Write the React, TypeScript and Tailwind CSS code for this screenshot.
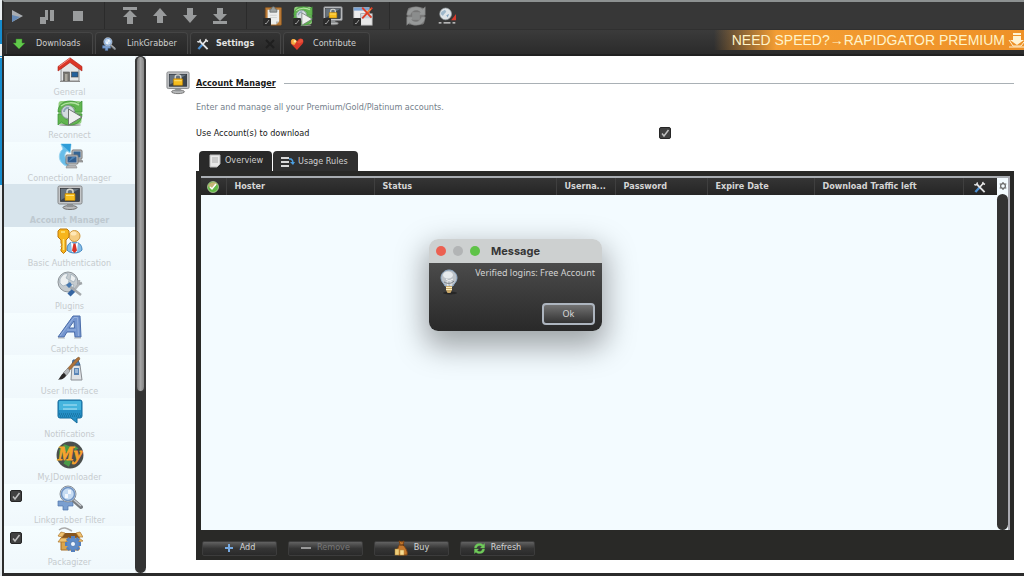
import { useState } from "react";
import type { ReactNode } from "react";

/* ── Shared pieces ── */

function Svg({ className = "w-[26px] h-[26px]", children }: { className?: string; children: ReactNode }) {
  return (
    <svg viewBox="0 0 26 26" className={`shrink-0 ${className}`} fill="none" aria-hidden="true">
      {children}
    </svg>
  );
}

function Check({ id, label }: { id: string; label?: string }) {
  const [on, setOn] = useState(true);
  return (
    <span className="relative block w-3 h-3 shrink-0">
      <input
        id={id}
        type="checkbox"
        aria-label={label}
        checked={on}
        onChange={() => setOn(!on)}
        className="block w-3 h-3 appearance-none rounded-xs border border-[#262626] bg-[#414141]"
      />
      {on && (
        <svg viewBox="0 0 12 12" className="absolute inset-0 w-3 h-3 pointer-events-none" fill="none">
          <path d="M3 6.500 5 9 9.500 3" stroke="#c0c0c0" strokeWidth="1.500" />
        </svg>
      )}
    </span>
  );
}

/* ── Icons ── */

function HomeIcon() {
  return (
    <Svg>
      <path d="M4 12 13 4l9 8v12H4z" fill="#e4e6e7" stroke="#777" strokeWidth=".8" />
      <path d="M1 14V9.500L13 .8l12 8.700V14L13 5.500z" fill="#dc3526" stroke="#a92118" strokeWidth=".6" />
      <path d="m2 9.500 11-8" stroke="#f3867b" strokeWidth="1" />
      <rect x="6.500" y="15" width="6" height="9" fill="#77756f" stroke="#555" strokeWidth=".6" />
      <rect x="8" y="17" width="2.500" height="7" fill="#a9a69d" />
      <rect x="14.500" y="15" width="6.500" height="5" fill="#24619c" stroke="#444" strokeWidth=".6" />
      <path d="M3 24.500h20" stroke="#8b8b8b" />
    </Svg>
  );
}

function RefreshArrows({ main = "#62b550", edge = "#388f35" }: { main?: string; edge?: string }) {
  return (
    <g fill={main} stroke={edge} strokeWidth=".7">
      <path d="M1 12C1 5 6 1 13 1c4 0 6 1 8.500 3L25 1v11H15l3.500-4C15 4.500 8 5 6 12z" />
      <path d="M25 14c0 7-5 11-12 11-4 0-6-1-8.500-3L1 25V14h10l-3.500 4c3.500 3.500 10.500 3 12.500-4z" />
    </g>
  );
}

function ReconnectIcon({ className }: { className?: string }) {
  return (
    <Svg className={className}>
      <ellipse cx="13" cy="25" rx="11" ry="1" fill="#9a9a9a" />
      <rect x="1.500" y="1" width="23" height="23" rx="3" fill="#92ce7e" />
      <RefreshArrows />
      <circle cx="11" cy="12" r="6.500" fill="#d5dde0" stroke="#8b9a9e" />
      <path d="M7 12a4 4 0 0 1 5-4" stroke="#8fa6b8" strokeWidth="2" />
      <path d="M4 6c5-4 13-4 18-1" stroke="#b3e3a2" strokeWidth="1.500" />
      <path d="M11.500 9 25 17l-13.500 8z" fill="#eef0ef" stroke="#6f7572" />
    </Svg>
  );
}

function ConnectionIcon() {
  return (
    <Svg>
      <path d="M12 24C1 21 0 11 6 6L4 1h10l-1 9-3-2c-3 3-3 7 1 9z" fill="#67bde9" stroke="#98d4f0" />
      <path d="M4 1h10l-1 8z" fill="#2f9dd8" />
      <rect x="15" y="7" width="10" height="9" rx="1" fill="#c3c5c6" stroke="#777" />
      <rect x="16.500" y="8.500" width="7" height="6" fill="#356492" />
      <path d="M20 17h5l1 2h-6z" fill="#a7a7a7" stroke="#777" strokeWidth=".6" />
      <rect x="9" y="12" width="12" height="9" rx="1" fill="#c3c5c6" stroke="#777" />
      <rect x="10.500" y="13.500" width="9" height="6" fill="#315d8e" />
      <path d="m11 19 4-5h4z" fill="#4a83b7" />
      <path d="M10 22.500h9l1 2.500H9z" fill="#b5b5b5" stroke="#888" strokeWidth=".6" />
    </Svg>
  );
}

function MonitorLockIcon({ className }: { className?: string }) {
  return (
    <Svg className={className}>
      <ellipse cx="13" cy="22.500" rx="7" ry="2" fill="#b7b9ba" stroke="#717171" />
      <path d="M10 18h6v4h-6z" fill="#8f9294" />
      <rect x="1" y="1" width="24" height="18" rx="1.500" fill="#c4c6c8" stroke="#838688" />
      <rect x="3.500" y="3.500" width="19" height="13" fill="#3c454f" stroke="#202428" strokeWidth=".6" />
      <path d="M4 4h18L4 15z" fill="#66727d" />
      <path d="M10 9V6.500C10 3.500 16 3.500 16 6.500V9" stroke="#d6d6ce" strokeWidth="1.500" />
      <rect x="8" y="8.500" width="10" height="7" rx=".6" fill="#f6bd1d" stroke="#b47b07" strokeWidth=".7" />
      <path d="M9 10.500h8" stroke="#ffe27c" />
    </Svg>
  );
}

function AuthIcon() {
  return (
    <Svg>
      <path d="M10 22c0-6 3-8 7-8s8 2 8 8c-3 4-12 4-15 0z" fill="#86bde6" stroke="#4387c0" />
      <path d="m14 14 3.500 3 3.500-3-1 10h-5z" fill="#fff" />
      <path d="m16.500 15.500-1.500 7 2.500 2.500 2.500-2.500-1.500-7z" fill="#d73228" />
      <circle cx="17.500" cy="8" r="5.500" fill="#f5cd82" stroke="#cf983e" />
      <ellipse cx="16.500" cy="5.500" rx="3" ry="2" fill="#ffe8b7" />
      <path d="M1 3 3 1h7l2 2v6l-3 3v11l-2.500 2.500L4 23v-2l1-1-1-1.500 1-1.500-1-2v-3L1 9z" fill="#f7b51b" stroke="#bd780d" />
      <path d="M4 4h4M6.500 11v11" stroke="#ffe57b" strokeWidth="1.500" />
    </Svg>
  );
}

function PluginsIcon() {
  return (
    <Svg>
      <circle cx="11" cy="11" r="10" fill="#c5cbcf" stroke="#8d9499" />
      <path d="M3 8c3-5 5-6 8-5l-2 4 3 2-1 4-5 2-3-3zM14 3l5 4-2 4-4-2zM13 13l4 1-3 5z" fill="#edf0f1" stroke="#8196a5" strokeWidth=".5" />
      <path d="m12 24 6-6" stroke="#3565a2" strokeWidth="4.500" />
      <path d="m18 18 4-5V9" stroke="#b0b4b7" strokeWidth="2.500" />
      <path d="m22 13 3-1" stroke="#a0a5a8" strokeWidth="2.500" />
      <path d="m11 14 13 10" stroke="#a6aaad" strokeWidth="2.500" />
      <path d="m9 14 4-3 2 3-3 3" fill="#4577af" />
    </Svg>
  );
}

function CaptchaIcon() {
  return (
    <Svg>
      <path d="M1 23 16 2h7l1 21h-6l-.5-5H10l-3 5z" fill="#7395cf" stroke="#4b6da9" />
      <path d="m12 14 5-7 .5 7z" fill="#f2fbff" stroke="#4b6da9" />
      <path d="M3 22 17 3.500h3.500l1 18.500M10 16h9" stroke="#a5bde2" strokeWidth=".7" />
      <path d="M1 24h7M17 24h7" stroke="#999" strokeWidth=".7" />
    </Svg>
  );
}

function BrushIcon() {
  return (
    <Svg>
      <path d="M15 9h8l2 15H14z" fill="#dfe2e5" stroke="#8a8e93" />
      <path d="m15 9 1-5h5l2 5z" fill="#4a7fb7" stroke="#385f8b" />
      <rect x="17" y="12" width="5" height="7" fill="#5a85b6" />
      <path d="M18 14h3M18 16h3" stroke="#dce8f4" />
      <path d="m20 2 2-1 1 2-11 12-2-2z" fill="#ad723a" stroke="#775028" strokeWidth=".5" />
      <path d="m11 12 2 3-4 5-3-3z" fill="#b6babd" stroke="#777" strokeWidth=".6" />
      <path d="M7 17c3 2 2 4 0 5-2 2-4 1-6 2 2-2 3-6 6-7z" fill="#2b2929" />
    </Svg>
  );
}

function NotifyIcon() {
  return (
    <Svg>
      <path d="M3 1h20q2 0 2 2v14q0 2-2 2h-3v5l-6-5H3q-2 0-2-2V3q0-2 2-2z" fill="#258fc5" stroke="#156b9b" />
      <path d="M2 3q0-1 1-1h20q1 0 1 1v8H2z" fill="#45b4dd" />
      <path d="M6 6h14M6 10h14" stroke="#b5e5f5" />
      <path d="M2 15h22M3 17h22" stroke="#13628f" strokeDasharray="1 1" />
    </Svg>
  );
}

function MyIcon() {
  return (
    <Svg className="w-7 h-7">
      <circle cx="13" cy="13" r="12.500" fill="#4b504d" />
      <path d="M3 8 8 3l5 2-2 5-5 1-1 4-2-1zM9 17l5 2-2 5-5-3zM17 4l4 3-4 2z" fill="#4a9a48" />
      <text x="13" y="18" textAnchor="middle" fontFamily="Liberation Serif, serif" fontSize="17" fontStyle="italic" fontWeight="700" fill="#f6a32c" stroke="#f6a32c" strokeWidth=".7">
        My
      </text>
    </Svg>
  );
}

function SearchIcon({ className }: { className?: string }) {
  return (
    <Svg className={className}>
      <path d="M1 16h15v5H11v4H6v-4H1z" fill="#7a9fd0" stroke="#4e73a9" strokeWidth=".7" />
      <path d="m16 15 8 7" stroke="#777c80" strokeWidth="4" strokeLinecap="round" />
      <path d="m17 15 7 6" stroke="#c6cace" strokeWidth="1.500" />
      <circle cx="11" cy="9" r="8" fill="#d8e7f6" stroke="#8c9298" />
      <circle cx="11" cy="9" r="6.500" fill="#c6dcf3" stroke="#6f93c3" strokeWidth="1.500" />
      <path d="M11 5h3v4h-3v4H8V9h3z" fill="#f2f7fd" />
    </Svg>
  );
}

function PackageIcon() {
  return (
    <Svg>
      <path d="M2 3c5-4 9-1 13 1" stroke="#aaa" strokeWidth="1.500" />
      <path d="M4 11h18v12H4z" fill="#dba54b" stroke="#a56f28" />
      <path d="m4 11 4-5h12l3 5z" fill="#87561e" />
      <path d="m4 11-3 4h8l3-4zM22 11l4 3-7 1-3-4zM8 6 4 5 1 9l4 1zM19 6l4-1 3 5h-4z" fill="#f0c26f" stroke="#ad752b" strokeWidth=".7" />
      <g transform="translate(16 17)">
        {[0, 45, 90, 135].map((a) => (
          <rect key={a} x="-2" y="-8" width="4" height="16" fill="#547fbc" transform={`rotate(${a})`} />
        ))}
        <circle r="6" fill="#5d8bc8" />
        <circle r="2.500" fill="#edf6ff" stroke="#3e68a2" strokeWidth=".7" />
      </g>
    </Svg>
  );
}

function ToolsIcon({ className }: { className?: string }) {
  return (
    <Svg className={className}>
      <path d="m3 24 9-10" stroke="#4c8fd1" strokeWidth="5" />
      <path d="m12 14 8-9" stroke="#ececec" strokeWidth="3.500" />
      <path d="m19 2 1 4 4 1" stroke="#ececec" strokeWidth="3" />
      <path d="m5 6 18 18" stroke="#e2e3e4" strokeWidth="4" />
      <path d="M1 7c2 3 7 1 6-4" stroke="#e2e3e4" strokeWidth="3" />
    </Svg>
  );
}

function ClipboardIcon({ className }: { className?: string }) {
  return (
    <Svg className={className}>
      <rect x="3" y="2" width="21" height="23" rx="1" fill="#bb7b36" stroke="#815223" />
      <path d="M6 5h15v15l-4 4H6z" fill="#eceeec" />
      <path d="M17 24v-4h4z" fill="#b3b7b5" />
      <path d="M9 4h2c0-4 5-4 5 0h2v4H9z" fill="#999f9e" stroke="#676d6c" />
      <path d="M9 12h9M9 15h9" stroke="#c9cccb" />
    </Svg>
  );
}

function WindowsIcon({ className }: { className?: string }) {
  return (
    <Svg className={className}>
      <rect x="1" y="2" width="20" height="14" fill="#ededed" stroke="#aaa" />
      <path d="M1 2h20v4H1z" fill="#7ba3d4" />
      <rect x="10" y="10" width="15" height="15" fill="#e8e8e8" stroke="#999" />
      <path d="M10 12h15v4H10z" fill="#c5d0dd" />
      <path d="m12 2 12 13M25 2 12 16" stroke="#dc4028" strokeWidth="2.500" />
      <path d="m23 4-4 4" stroke="#f1a238" strokeWidth="1.500" />
    </Svg>
  );
}

function UpdateIcon({ className }: { className?: string }) {
  return (
    <Svg className={className}>
      <circle cx="11" cy="10" r="8.500" fill="#dfe4e8" stroke="#9da5aa" />
      <path d="M5 7l5-3 2 3-3 3-2 3-3-3z" fill="#9fb8cb" />
      <path d="M12 12l4-2-2 5z" fill="#7fa2bf" />
      <path d="m26 10-7 9h7z" fill="#d73b2c" />
      <path d="M1 23h4M8 23h10M21 23h4" stroke="#ddd" strokeWidth="2" />
    </Svg>
  );
}

function HeartIcon() {
  return (
    <Svg className="w-3.5 h-3.5">
      <path d="M13 24 3 14C-2 8 5 1 11 6l2 2 3-4c6-4 12 3 7 9z" fill="#da3a2b" />
      <path d="M2 7c1-5 7-4 9-1l2 2-5 7-5-2z" fill="#f3ad40" />
      <path d="M7 6h4v4H7z" fill="#ffe9b0" />
      <path d="m13 10 6-6c4-1 6 2 5 5l-7 3z" fill="#e8503a" />
    </Svg>
  );
}

function BulbIcon() {
  return (
    <Svg className="w-[26px] h-[26px]">
      <ellipse cx="14" cy="24" rx="7" ry="1.500" fill="#262626" />
      <path d="M9 17C8 14 5 13 5 9c0-5 4-8 8-8s8 3 8 8c0 4-3 5-4 8z" fill="#bcc2c8" stroke="#8faac7" />
      <ellipse cx="12" cy="6" rx="5" ry="3.500" fill="#e6eaed" />
      <path d="M10 10l3 2 4-2M11 12l1 5M15 12v5" stroke="#f4f4f4" />
      <path d="M8 13c4 2 7 2 10-1" stroke="#777e84" />
      <path d="M10 17h6v4l-1.500 3h-3L10 21z" fill="#c9a869" />
      <path d="M10 18.500h6M10 20.500h6" stroke="#fff0bd" />
    </Svg>
  );
}

/* ── Top toolbar ── */

function GrayShape({ d }: { d: string }) {
  return (
    <svg viewBox="0 0 18 18" className="w-[18px] h-[18px]" aria-hidden="true">
      <path d={d} fill="#999b9c" />
    </svg>
  );
}

const moveButtons = [
  { label: "Move to top", d: "M2 0h14v3H2zM9 3l7 7h-4v7H6v-7H2z" },
  { label: "Move up", d: "m9 1 7 8h-4v7H6V9H2z" },
  { label: "Move down", d: "M6 1h6v7h4l-7 8-7-8h4z" },
  { label: "Move to bottom", d: "M6 1h6v6h4l-7 7-7-7h4zM2 14h14v3H2z" },
];

function ToolToggle({ label, children }: { label: string; children: ReactNode }) {
  return (
    <button aria-label={label} className="relative w-5 h-5">
      {children}
      <svg viewBox="0 0 8 8" className="absolute left-0 bottom-0 w-2 h-2">
        <rect width="8" height="8" rx="1" fill="#2b2b2b" />
        <path d="m2 5 1 1 3-4" stroke="#999" fill="none" />
      </svg>
    </button>
  );
}

function Toolbar() {
  return (
    <div className="flex items-center h-7 shrink-0 bg-[#373737] border-b border-[#303030]">
      <div className="flex items-center gap-3 w-[101px] h-full pl-1 border-r border-[#2b2b2b]">
        <button aria-label="Start">
          <svg viewBox="0 0 18 18" className="w-[18px] h-[18px]">
            <path d="m4 3 11 6-11 6z" fill="#a9adb2" />
            <path d="m4 8 8 2-8 5z" fill="#6489b7" />
          </svg>
        </button>
        <button aria-label="Pause">
          <GrayShape d="M7 3h3v4H7zM12 3h4v11h-4zM7 7h3v6H8v4H2v-7h5z" />
        </button>
        <button aria-label="Stop">
          <GrayShape d="M5 4h10v10H5z" />
        </button>
      </div>
      <div className="flex items-center gap-3 w-[142px] h-full pl-4 border-r border-[#2b2b2b]">
        {moveButtons.map((b) => (
          <button key={b.label} aria-label={b.label}>
            <GrayShape d={b.d} />
          </button>
        ))}
      </div>
      <div className="flex items-center gap-2.5 w-[143px] h-full pl-4 border-r border-[#2b2b2b]">
        <ToolToggle label="Clipboard monitoring">
          <ClipboardIcon className="w-5 h-5" />
        </ToolToggle>
        <ToolToggle label="Auto reconnect">
          <ReconnectIcon className="w-5 h-5" />
        </ToolToggle>
        <ToolToggle label="Premium">
          <MonitorLockIcon className="w-5 h-5" />
        </ToolToggle>
        <ToolToggle label="Silent mode">
          <WindowsIcon className="w-5 h-5" />
        </ToolToggle>
      </div>
      <div className="flex items-center gap-3 pl-4">
        <button aria-label="Reconnect now">
          <Svg className="w-5 h-5">
            <rect x="2" y="2" width="22" height="22" rx="4" fill="#777" />
            <RefreshArrows main="#979999" edge="#777" />
            <path d="M8 8h10v10H8z" fill="#8b8d8d" />
          </Svg>
        </button>
        <button aria-label="Check for updates">
          <UpdateIcon className="w-[18px] h-[18px]" />
        </button>
      </div>
    </div>
  );
}

/* ── Main tabs ── */

function MainTabs() {
  const base =
    "flex items-center h-[22px] rounded-t border-t border-x border-[#454545] bg-linear-to-b from-[#343434] to-[#272727]";
  return (
    <div className="flex items-end h-[26px] shrink-0 bg-linear-to-b from-[#3b3b3b] to-[#2b2b2b] border-b-2 border-[#202020] pl-0.5 gap-0.5">
      <button className={`${base} w-[87px] pl-1.5 gap-[11px] text-[#cfcfcf]`}>
        <svg viewBox="0 0 12 12" className="w-3 h-3">
          <path d="M3 1h6v4h3l-6 6-6-6h3z" fill="#61c94b" stroke="#357e29" strokeWidth=".5" />
        </svg>
        Downloads
      </button>
      <button className={`${base} w-[93px] pl-1.5 gap-[11px] text-[#cfcfcf]`}>
        <SearchIcon className="w-3.5 h-3.5" />
        LinkGrabber
      </button>
      <button className={`${base} w-[91px] pl-1.5 gap-[7px] font-bold text-[#e4e4e4]`}>
        <ToolsIcon className="w-3 h-3" />
        Settings
        <svg viewBox="0 0 10 10" className="w-2.5 h-2.5 ml-1">
          <path d="m1 1 8 8M9 1 1 9" stroke="#1f1f1f" strokeWidth="2" />
        </svg>
      </button>
      <button className={`${base} w-[87px] pl-1.5 gap-[9px] text-[#cfcfcf]`}>
        <HeartIcon />
        Contribute
      </button>
      <a
        href="#premium"
        className="ml-auto self-start flex items-center justify-end gap-[3px] h-5 w-[310px] bg-linear-to-r from-transparent via-[#f39d33] via-20% to-[#ee9127] text-[14px] text-[#fff3c9] whitespace-nowrap font-['Liberation_Sans',sans-serif]"
      >
        NEED SPEED?→RAPIDGATOR PREMIUM
        <svg viewBox="0 0 16 16" className="w-4 h-4 shrink-0" fill="none">
          <path d="M5 1h8v2H5zM5 4h8v4h3l-7 5-7-5h3z" fill="#fff3d2" />
          <path d="M1 8l4 6h8l3-4M1 15h15" stroke="#fff3d2" strokeWidth="1" />
        </svg>
      </a>
    </div>
  );
}

/* ── Settings sidebar ── */

const settings = [
  { label: "General", icon: <HomeIcon /> },
  { label: "Reconnect", icon: <ReconnectIcon /> },
  { label: "Connection Manager", icon: <ConnectionIcon /> },
  { label: "Account Manager", icon: <MonitorLockIcon />, active: true },
  { label: "Basic Authentication", icon: <AuthIcon /> },
  { label: "Plugins", icon: <PluginsIcon /> },
  { label: "Captchas", icon: <CaptchaIcon /> },
  { label: "User Interface", icon: <BrushIcon /> },
  { label: "Notifications", icon: <NotifyIcon /> },
  { label: "My.JDownloader", icon: <MyIcon /> },
  { label: "Linkgrabber Filter", icon: <SearchIcon />, toggle: true },
  { label: "Packagizer", icon: <PackageIcon />, toggle: true },
];

function Sidebar() {
  return (
    <aside className="flex shrink-0">
      <ul className="flex flex-col w-[131px] pb-1 bg-[#f3fbfe]">
        {settings.map((s) => (
          <li
            key={s.label}
            className={`grid grid-cols-[20px_1fr_20px] flex-1 ${
              s.active ? "bg-[#d7e4ec]" : "bg-linear-to-b from-[#f5fdff] to-[#f0f8fc]"
            }`}
          >
            <div className="pt-1.5 pl-1.5">{s.toggle && <Check id={s.label} label={s.label} />}</div>
            <button className="flex flex-col items-center pt-px gap-1">
              <span className="flex items-center justify-center h-[26px]">{s.icon}</span>
              <span
                className={`leading-[11px] whitespace-nowrap ${
                  s.active ? "font-bold text-[#bec9d0]" : "text-[#c6cbce]"
                }`}
              >
                {s.label}
              </span>
            </button>
          </li>
        ))}
      </ul>
      <div className="w-[11px] rounded-full bg-[#333]">
        <div className="h-[336px] rounded-full border-x-2 border-t border-b border-[#393939] bg-linear-to-r from-[#777] via-[#a5a5a5] to-[#858585]" />
      </div>
    </aside>
  );
}

/* ── Account manager page ── */

function AccountTable() {
  const th = "pl-2 text-left border-l border-[#3f3f3f] truncate";
  return (
    <div className="flex flex-1 border-t-2 border-r-2 border-t-[#a9adb2] border-r-[#a9a9b1] bg-[#f3fbff]">
      <div className="flex-1">
        <table className="w-full table-fixed font-bold text-[#d5d5d5]">
          <colgroup>
            <col className="w-[25px]" />
            <col className="w-[148px]" />
            <col />
            <col className="w-[59px]" />
            <col className="w-[92px]" />
            <col className="w-[107px]" />
            <col className="w-[149px]" />
            <col className="w-[34px]" />
          </colgroup>
          <thead>
            <tr className="h-[17px] bg-linear-to-b from-[#353535] to-[#252525]">
              <th aria-label="Enabled">
                <svg viewBox="0 0 12 12" className="w-3 h-3 mx-auto">
                  <circle cx="6" cy="6" r="5.500" fill="#62b947" stroke="#d9e4c3" strokeWidth=".6" />
                  <path d="M1 5c2-4 7-5 9-2L5 8z" fill="#c7b477" />
                  <path d="m3 6 2 2 4-5" stroke="#fff" strokeWidth="1.500" fill="none" />
                </svg>
              </th>
              <th className={th}>Hoster</th>
              <th className={th}>Status</th>
              <th className={th}>Userna...</th>
              <th className={th}>Password</th>
              <th className={th}>Expire Date</th>
              <th className={th}>Download Traffic left</th>
              <th className="border-l border-[#3f3f3f]" aria-label="Actions">
                <ToolsIcon className="w-3 h-3 mx-auto" />
              </th>
            </tr>
          </thead>
          <tbody />
        </table>
      </div>
      <div className="flex flex-col items-center w-[11px]">
        <button aria-label="Table settings" className="flex items-center h-4">
          <svg viewBox="0 0 10 10" className="w-2 h-2" fill="none">
            <circle cx="5" cy="5" r="3" stroke="#666" strokeWidth="1.500" />
            <path d="M5 0v2M5 8v2M1 2l1 1M8 7l1 1M1 8l1-1M8 3l1-1" stroke="#666" strokeWidth="1.500" />
          </svg>
        </button>
        <div className="flex-1 w-[11px] rounded-full bg-[#333]" />
      </div>
    </div>
  );
}

const actionButton =
  "flex items-center justify-center gap-1.5 h-[15px] w-[75px] rounded-xs border border-[#3c3c3c] bg-linear-to-b from-[#626262] via-[#353535] via-50% to-[#2a2a2a] text-[#d6d6d6] disabled:text-[#777]";

function Actions() {
  return (
    <div className="flex items-center gap-[11px] h-[30px] pt-1.5 pl-px">
      <button className={actionButton}>
        <svg viewBox="0 0 10 10" className="w-2.5 h-2.5">
          <path d="M4 1h2v3h3v2H6v3H4V6H1V4h3z" fill="#76a9e1" />
        </svg>
        Add
      </button>
      <button disabled className={actionButton}>
        <svg viewBox="0 0 10 10" className="w-2.5 h-2.5">
          <path d="M0 4h10v2H0z" fill="#999" />
        </svg>
        Remove
      </button>
      <button className={actionButton}>
        <svg viewBox="0 0 14 16" className="w-3.5 h-4">
          <path d="m6 4-1-3 3 1 2-1-1 4c3 3 5 7 4 10H4c-2-3 0-8 2-11z" fill="#c4782d" stroke="#7f4615" />
          <path d="M6 5h4" stroke="#522d11" />
          <rect x="1" y="9" width="4" height="6" fill="#f0ce7a" stroke="#b48637" strokeWidth=".5" />
          <rect x="6" y="10" width="4" height="5" fill="#f8dc94" stroke="#b48637" strokeWidth=".5" />
        </svg>
        Buy
      </button>
      <button className={actionButton}>
        <Svg className="w-[11px] h-[11px]">
          <RefreshArrows main="#6fca5a" edge="#6fca5a" />
        </Svg>
        Refresh
      </button>
    </div>
  );
}

function AccountManager() {
  return (
    <main className="flex flex-1 flex-col min-w-0 pl-5 pr-2.5 pt-3.5 pb-[13px] bg-white">
      <div className="flex items-center gap-1.5 h-[26px]">
        <MonitorLockIcon className="w-6 h-6" />
        <h1 className="pt-px font-bold underline text-[#191919]">Account Manager</h1>
        <div className="flex-1 h-px ml-0.5 bg-[#a9b0b5]" />
      </div>
      <p className="pl-[30px] mt-[5px] leading-3 text-[#74808b]">
        Enter and manage all your Premium/Gold/Platinum accounts.
      </p>
      <div className="flex items-center pl-[30px] mt-3.5 h-3">
        <label htmlFor="use-accounts" className="w-[463px] leading-3 text-[#171717]">
          Use Account(s) to download
        </label>
        <Check id="use-accounts" />
      </div>

      <div className="flex flex-1 flex-col pl-[30px] pt-3">
        <div className="flex items-end pl-[3px] gap-px text-[#cfcfcf]">
          <button className="flex items-center gap-1 h-5 w-[73px] pl-2.5 rounded-t bg-[#292929]">
            <svg viewBox="0 0 12 14" className="w-3 h-3.5">
              <path d="M1 1h10v9l-3 3H1z" fill="#e8e8e8" stroke="#bbb" />
              <path d="M3 4h6M3 6h6M3 8h6" stroke="#aaa" />
            </svg>
            Overview
          </button>
          <button className="flex items-center gap-[3px] h-5 w-[85px] pt-0.5 pl-2 rounded-t bg-[#303030]">
            <svg viewBox="0 0 14 12" className="w-3.5 h-3">
              <path d="M0 2h8M0 6h8M0 10h8" stroke="#d8d8d8" strokeWidth="2" />
              <path d="M8 3h2c2 1 2 2 2 4" stroke="#4b9ee0" strokeWidth="1.500" fill="none" />
              <path d="M9 6h5l-2 3z" fill="#4b9ee0" />
            </svg>
            Usage Rules
          </button>
        </div>
        <div className="flex flex-1 flex-col bg-[#292927] pt-[5px] pl-[5px] pr-1">
          <AccountTable />
          <Actions />
        </div>
      </div>
    </main>
  );
}

/* ── Message dialog ── */

function MessageDialog() {
  return (
    <div
      role="dialog"
      aria-labelledby="message-title"
      className="absolute left-[429px] top-[239px] w-[173px] rounded-[9px] overflow-hidden shadow-[0_12px_30px_4px_rgba(0,0,0,0.35)] font-['Noto_Sans',sans-serif]"
    >
      <div className="flex items-center h-6 px-[7px] gap-[7px] bg-[#cdd0d0]">
        <button aria-label="Close" className="w-2.5 h-2.5 rounded-full bg-[#ec6051]" />
        <button aria-label="Minimize" disabled className="w-2.5 h-2.5 rounded-full bg-[#b2b4b5]" />
        <button aria-label="Zoom" className="w-2.5 h-2.5 rounded-full bg-[#5fc348]" />
        <h2 id="message-title" className="ml-1 text-[11px] font-bold text-[#363636] font-['Inter',sans-serif]">
          Message
        </h2>
      </div>
      <div className="flex flex-col gap-5 px-[7px] pt-1 pb-1 h-[68px] bg-linear-to-b from-[#4b4b4b] to-[#292929]">
        <div className="flex justify-between h-4">
          <div className="pt-0.5">
            <BulbIcon />
          </div>
          <p className="leading-3 text-[#d2d2d2]">Verified logins: Free Account</p>
        </div>
        <button className="self-end w-[53px] h-[22px] rounded border-2 border-[#adb5bf] bg-linear-to-b from-[#737373] to-[#343434] text-[#d7d7d7]">
          Ok
        </button>
      </div>
    </div>
  );
}

export default function App() {
  return (
    <div className="relative flex min-h-screen bg-[#e8edf0] text-[9px] font-['DejaVu_Sans_Condensed','DejaVu_Sans',sans-serif]">
      {/* Sliver of the window behind */}
      <div className="w-0.5 shrink-0 pt-5">
        <div className="h-6 bg-[#168ccd]" />
        <div className="h-px mt-3 bg-[#168ccd]" />
        <div className="h-[127px] mt-px bg-[#168ccd]" />
      </div>
      <div className="flex flex-1 flex-col min-w-0 border-l-2 border-t-2 border-b-[3px] border-l-[#2c2c2c] border-t-[#8d9191] border-b-[#2b2b2b]">
        <Toolbar />
        <MainTabs />
        <div className="flex flex-1">
          <Sidebar />
          <AccountManager />
        </div>
      </div>
      <MessageDialog />
    </div>
  );
}
